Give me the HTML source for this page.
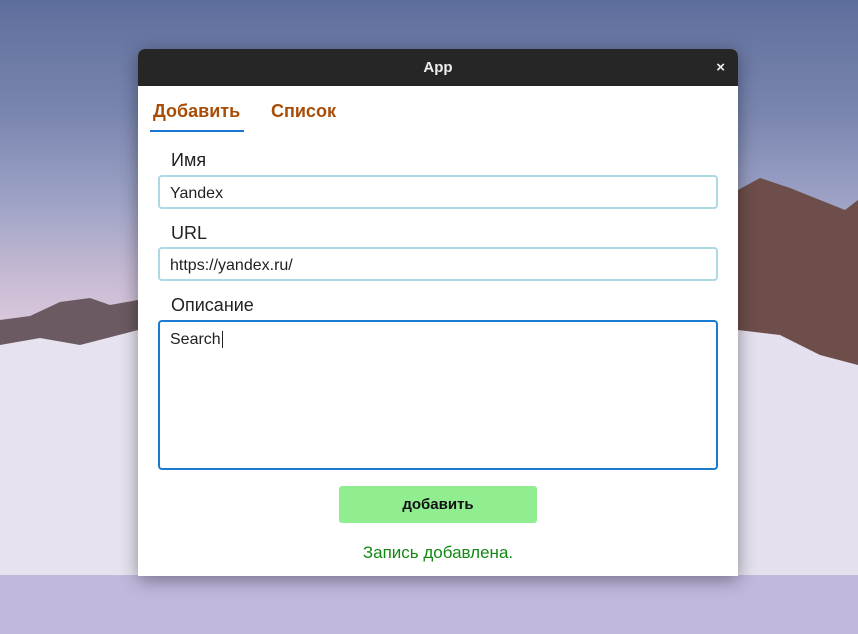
<!DOCTYPE html>
<html><head><meta charset="utf-8"><style>
body{margin:0;width:858px;height:634px;overflow:hidden;position:relative;font-family:"Liberation Sans","DejaVu Sans",sans-serif;
background:linear-gradient(180deg,#5e6e9c 0%,#7a86b0 18%,#9ea3c6 32%,#c2b7d2 42%,#d6c6da 50%,#c9bfda 62%,#b9b1d6 78%,#a79ccb 100%);}
.bg{position:absolute}
.win{position:absolute;left:138px;top:49px;width:600px;height:527px;background:#fff;border-radius:7px 7px 0 0;box-shadow:0 4px 18px rgba(0,0,0,.4);overflow:hidden}
.tb{height:37px;background:#262626;color:#eee;font-weight:bold;font-size:15px;text-align:center;line-height:38px;position:relative}
.x{position:absolute;right:13px;top:0;font-size:15px}
.tab{position:absolute;top:52px;font-size:18px;font-weight:bold;color:#a84c06}
.lbl{position:absolute;left:33px;font-size:18px;color:#222}
.in{position:absolute;left:20px;width:560px;border:2px solid #add8e6;border-radius:4px;font-size:16px;color:#222;box-sizing:border-box;padding-left:10px}
</style></head><body>
<svg class="bg" width="858" height="634" style="left:0;top:0">
<polygon points="0,320 30,316 60,302 90,298 110,305 138,300 138,634 0,634" fill="#6c5a62"/>
<polygon points="0,345 40,338 80,345 138,330 138,634 0,634" fill="#e6e2ef"/>
<polygon points="738,190 760,178 790,188 820,200 845,210 858,200 858,400 738,400" fill="#6e4e4a"/>
<polygon points="738,330 780,335 820,355 858,365 858,634 738,634" fill="#e4e0ee"/>
<rect x="0" y="575" width="858" height="59" fill="#c2b8de"/>
</svg>
<div class="win">
<div class="tb">App<span class="x">×</span></div>
<div class="tab" style="left:15px">Добавить</div>
<div style="position:absolute;left:12px;top:81px;width:94px;height:2px;background:#1976d2"></div>
<div class="tab" style="left:133px">Список</div>
<div class="lbl" style="top:101px">Имя</div>
<div class="in" style="top:126px;height:34px;line-height:33px">Yandex</div>
<div class="lbl" style="top:174px">URL</div>
<div class="in" style="top:198px;height:34px;line-height:33px">https://yandex.ru/</div>
<div class="lbl" style="top:246px">Описание</div>
<div class="in" style="top:271px;height:150px;border-color:#1a7bd0;padding-top:9px">Search<span style="border-left:1px solid #222;margin-left:1px"></span></div>
<div style="position:absolute;left:201px;top:437px;width:198px;height:37px;background:#90ee90;border-radius:3px;text-align:center;line-height:38px;font-weight:bold;font-size:15px;color:#111">добавить</div>
<div style="position:absolute;left:0;width:600px;top:494px;text-align:center;font-size:17px;color:#118811">Запись добавлена.</div>
</div>
</body></html>
